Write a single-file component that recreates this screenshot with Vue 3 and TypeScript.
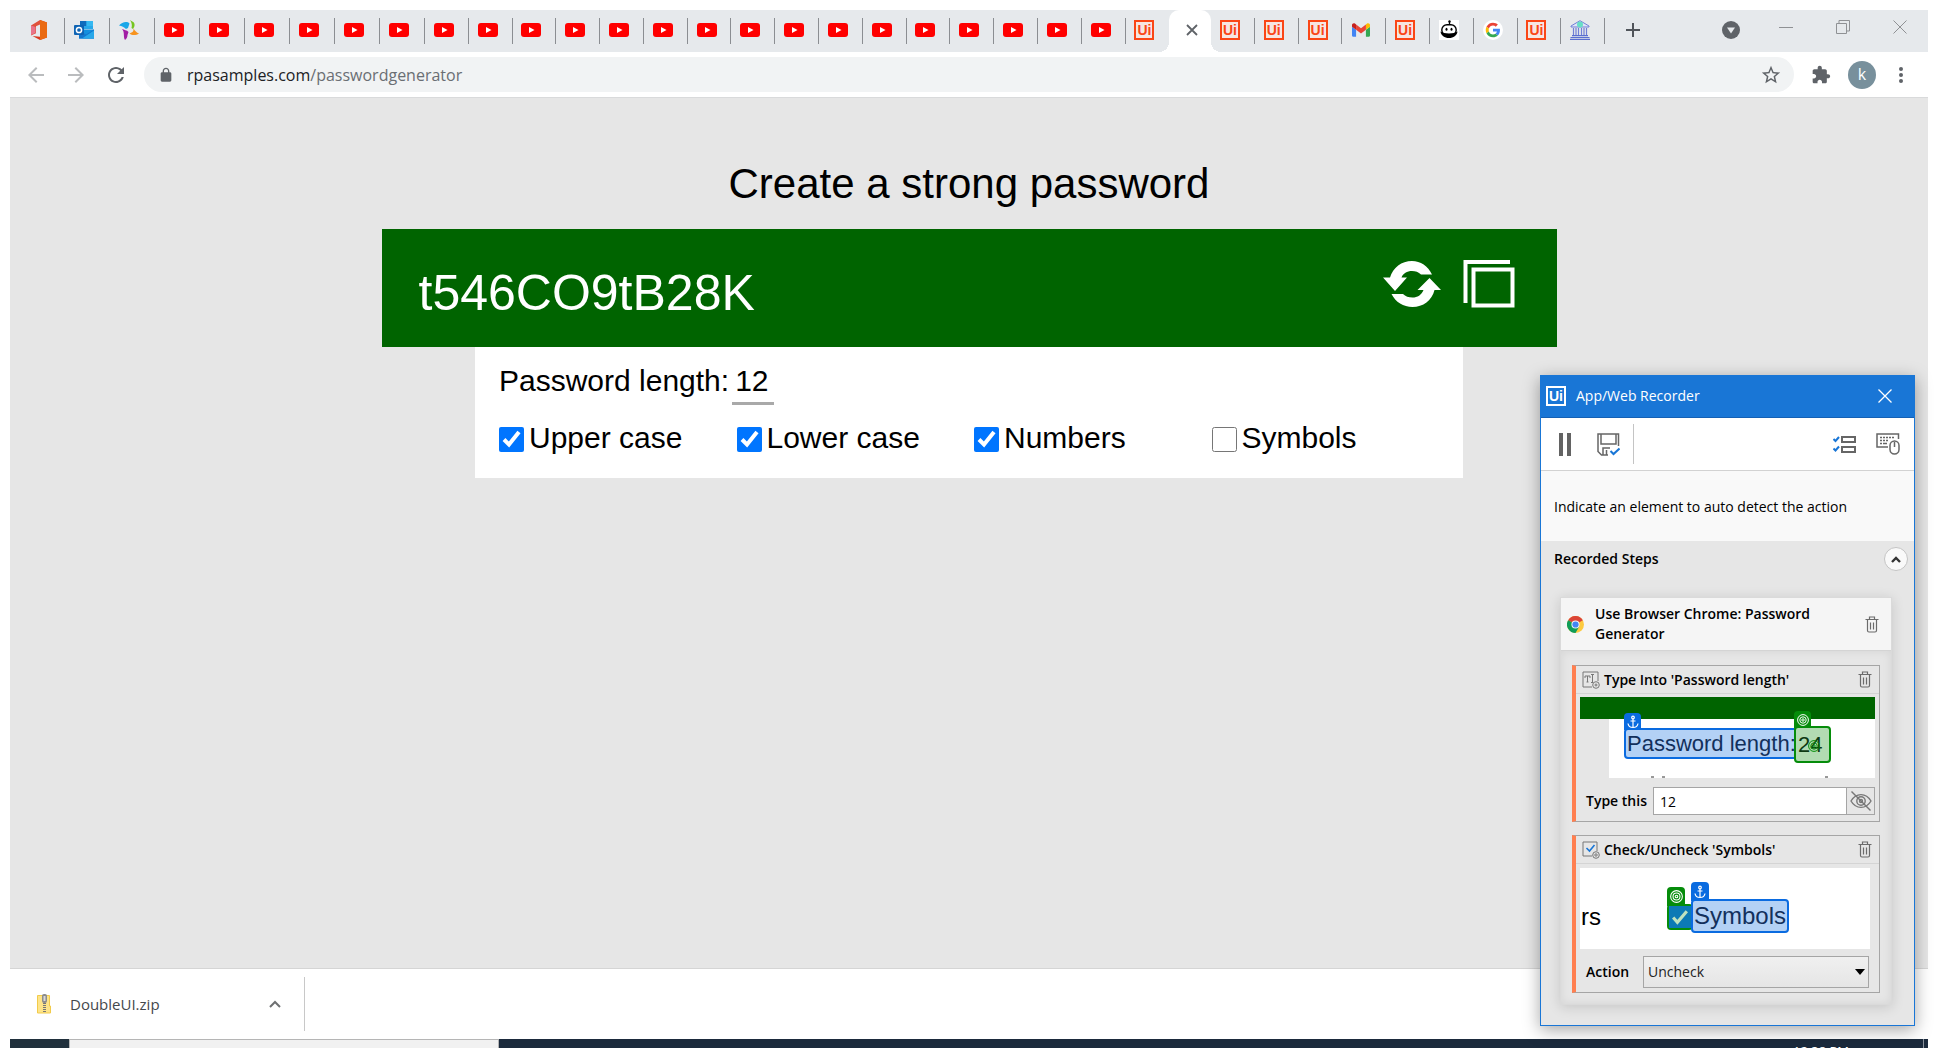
<script setup lang="ts">
import { ref } from 'vue'

type TabIcon = 'office' | 'outlook' | 'star' | 'youtube' | 'uipath' | 'gmail' | 'bot' | 'google' | 'bank'

interface Tab {
  icon: TabIcon
  title: string
  wide?: boolean
  active?: boolean
  last?: boolean
}

const tabs: Tab[] = [
  { icon: 'office', title: 'Office', wide: true },
  { icon: 'outlook', title: 'Outlook', wide: true },
  { icon: 'star', title: 'Workspace', wide: true },
  ...Array.from({ length: 22 }, (_, i): Tab => ({ icon: 'youtube', title: 'YouTube', wide: i < 6 })),
  { icon: 'uipath', title: 'UiPath', last: true },
  { icon: 'uipath', title: 'Password Generator', active: true },
  { icon: 'uipath', title: 'UiPath' },
  { icon: 'uipath', title: 'UiPath' },
  { icon: 'uipath', title: 'UiPath' },
  { icon: 'gmail', title: 'Gmail' },
  { icon: 'uipath', title: 'UiPath' },
  { icon: 'bot', title: 'Bot' },
  { icon: 'google', title: 'Google' },
  { icon: 'uipath', title: 'UiPath' },
  { icon: 'bank', title: 'Bank' },
]

const password = ref('t546CO9tB28K')
const passwordLength = ref('12')
const options = ref([
  { label: 'Upper case', checked: true },
  { label: 'Lower case', checked: true },
  { label: 'Numbers', checked: true },
  { label: 'Symbols', checked: false },
])

const typedText = ref('12')
const action = ref('Uncheck')
</script>

<template>
  <div class="screen">
    <svg class="sprite" aria-hidden="true">
      <symbol id="i-office" viewBox="0 0 20 20">
        <path d="M2 5.500L11 0v4.600L7 6.200v7L2 15.500z" fill="#e0523c" />
        <path d="M2 5.500v9.500l4.500-2.200V7z" fill="#e8748a" />
        <path d="M11 0l7 2.500v15L11 20 3.500 16 11 16.700z" fill="#d8371c" />
        <path d="M11 0l7 2.500v15L11 20z" fill="#ea6a12" />
      </symbol>
      <symbol id="i-outlook" viewBox="0 0 20 20">
        <path d="M6 1h13v8H6z" fill="#28a8ea" />
        <path d="M6 1h6.500v5H6z" fill="#0f6cbd" />
        <path d="M12.500 1H19v5h-6.500z" fill="#35b8f1" />
        <path d="M5 9.500h15V18.500H5z" fill="#1490df" />
        <path d="M20 9.500l-8 5-7-4V18.500h15z" fill="#1377cf" />
        <path d="M8 18.500l12-8v8z" fill="#28a8ea" />
        <rect y="5" width="10" height="10" rx="1" fill="#0f64b4" />
        <circle cx="5" cy="10" r="2.600" fill="none" stroke="#fff" stroke-width="1.500" />
      </symbol>
      <symbol id="i-star" viewBox="0 0 20 20">
        <path d="M0 5.500C3 2 8 1 10.500 3.500L9 8 7 9C5 7 3 6 0 5.500z" fill="#1aa7e8" />
        <path d="M11 0c2 1.500 4 1.500 4.500 4 .3 2-.5 3.500-1.500 5l-1.500-1c.8-3 .3-5-1.500-8z" fill="#76c51f" />
        <path d="M20 13.500c-3 2-7 2-9.500 0l3-1.500c1-1 1-2 1-3.500 1.500 2.500 3 4 5.500 5z" fill="#f7931e" />
        <path d="M3 9c2 1 5 1 6.500 3l-1 3c0 2-1 4-2.500 5-2-3 0-8-3-11z" fill="#a21fa5" />
      </symbol>
      <symbol id="i-youtube" viewBox="0 0 20 14">
        <rect width="20" height="14" rx="3" fill="#f00" />
        <path d="M8 4l5.500 3L8 10z" fill="#fff" />
      </symbol>
      <symbol id="i-gmail" viewBox="52 42 88 66">
        <path fill="#4285f4" d="M58 108h14V74L52 59v43c0 3.320 2.690 6 6 6" />
        <path fill="#34a853" d="M120 108h14c3.320 0 6-2.690 6-6V59l-20 15" />
        <path fill="#fbbc04" d="M120 48v26l20-15v-8c0-7.420-8.470-11.650-14.400-7.200" />
        <path fill="#ea4335" d="M72 74V48l24 18 24-18v26L96 92" />
        <path fill="#c5221f" d="M52 51v8l20 15V48l-5.600-4.200c-5.940-4.450-14.400-.22-14.400 7.200" />
      </symbol>
      <symbol id="i-bot" viewBox="0 0 20 20">
        <rect width="20" height="20" fill="#fff" />
        <path d="M10.500 2v3" stroke="#000" stroke-width="1.300" />
        <circle cx="10.500" cy="1.500" r="1.200" />
        <rect x="2.800" y="4.800" width="14.400" height="10.400" rx="5.200" fill="#fff" stroke="#000" stroke-width="1.400" />
        <ellipse cx="7.500" cy="9.300" rx="1" ry="1.500" />
        <ellipse cx="12.500" cy="9.300" rx="1" ry="1.500" />
        <path d="M1.500 11.500c3 2.500 14 2.500 17 0-.5 4-4 6.500-8.500 6.500s-8-2.500-8.500-6.500z" />
      </symbol>
      <symbol id="i-google" viewBox="-9 -9 66 66">
        <circle cx="24" cy="24" r="33" fill="#fff" />
        <path fill="#ea4335" d="M24 9.500c3.540 0 6.710 1.220 9.210 3.600l6.850-6.850C35.900 2.380 30.470 0 24 0 14.620 0 6.510 5.380 2.560 13.220l7.980 6.190C12.430 13.720 17.740 9.500 24 9.500z" />
        <path fill="#4285f4" d="M46.980 24.550c0-1.570-.15-3.090-.38-4.550H24v9.020h12.940c-.58 2.960-2.260 5.480-4.780 7.180l7.730 6c4.510-4.180 7.090-10.360 7.090-17.650z" />
        <path fill="#fbbc05" d="M10.530 28.590c-.48-1.450-.76-2.990-.76-4.590s.27-3.140.76-4.590l-7.980-6.190C.92 16.460 0 20.120 0 24s.92 7.540 2.560 10.780l7.970-6.190z" />
        <path fill="#34a853" d="M24 48c6.480 0 11.930-2.130 15.890-5.810l-7.730-6c-2.150 1.450-4.920 2.300-8.160 2.300-6.260 0-11.570-4.220-13.470-9.910l-7.980 6.190C6.510 42.620 14.620 48 24 48z" />
      </symbol>
      <symbol id="i-bank" viewBox="0 0 20 20">
        <path d="M1 6l9-5.300L19 6v1H1z" fill="#dfe4f8" stroke="#6f7fd6" />
        <circle cx="10" cy="4.500" r="3" fill="#67dfc6" />
        <path d="M3.500 8v7M6 8v7M8.500 8v7M11.500 8v7M14 8v7M16.500 8v7" stroke="#6f7fd6" stroke-width="1.200" />
        <path d="M2 15.700h16M.500 17.500h19M0 19.300h20" stroke="#5a6fd0" stroke-width="1.200" />
      </symbol>
      <symbol id="i-trash" viewBox="0 0 14 17">
        <path d="M0.500 3.500h13M4.500 3V1h5v2M2.500 4v10.500q0 1.500 1.500 1.500h6q1.500 0 1.500-1.500V4M5.500 6.500v7M8.500 6.500v7" fill="none" stroke="#6b6b6b" stroke-width="1.200" />
      </symbol>
      <symbol id="i-anchor" viewBox="0 0 12 14">
        <g fill="none" stroke="#fff" stroke-width="1.200">
          <circle cx="6" cy="2.500" r="1.300" />
          <path d="M6 4v8.500M3.500 6h5M1 8.500c.5 3 2.500 4 5 4s4.500-1 5-4" />
        </g>
      </symbol>
      <symbol id="i-target" viewBox="0 0 12 12">
        <g fill="none" stroke="currentColor">
          <circle cx="6" cy="6" r="5.400" />
          <circle cx="6" cy="6" r="3.200" />
          <circle cx="6" cy="6" r="1.200" />
        </g>
      </symbol>
    </svg>

    <div class="browser">
      <header class="tab-strip">
        <div class="tabs" role="tablist">
          <button
            v-for="(tab, i) in tabs"
            :key="i"
            type="button"
            role="tab"
            class="tab"
            :class="{ wide: tab.wide, active: tab.active, last: tab.last }"
            :aria-label="tab.title"
            :aria-selected="!!tab.active"
          >
            <svg v-if="tab.active" class="tab-close" viewBox="0 0 12 12">
              <path d="M1 1l10 10M11 1L1 11" stroke="#5f6368" stroke-width="1.800" />
            </svg>
            <span v-else-if="tab.icon === 'uipath'" class="ui-logo">Ui</span>
            <svg v-else class="favicon" :class="tab.icon"><use :href="'#i-' + tab.icon" /></svg>
          </button>
        </div>
        <div class="window-controls">
          <button type="button" class="ctl new-tab" aria-label="New tab">
            <svg width="16" height="16" viewBox="0 0 16 16"><path d="M8 1v14M1 8h14" stroke="#50545a" stroke-width="2" /></svg>
          </button>
          <div class="ctl-right">
            <button type="button" class="ctl search-tabs" aria-label="Search tabs">
              <svg width="18" height="18" viewBox="0 0 18 18"><circle cx="9" cy="9" r="9" fill="#5f6368" /><path d="M5 6.500h8L9 12.500z" fill="#e6e9ec" /></svg>
            </button>
            <button type="button" class="ctl" aria-label="Minimize">
              <svg width="14" height="14" viewBox="0 0 14 14"><path d="M0 7.500h14" stroke="#8f9194" /></svg>
            </button>
            <button type="button" class="ctl" aria-label="Restore">
              <svg width="14" height="14" viewBox="0 0 14 14"><path d="M.5 3.500h10v10H.5zM3 3.500v-3h10.500V11H11" fill="none" stroke="#8f9194" /></svg>
            </button>
            <button type="button" class="ctl" aria-label="Close">
              <svg width="14" height="14" viewBox="0 0 14 14"><path d="M.5.5l13 13M13.500.5l-13 13" stroke="#8f9194" /></svg>
            </button>
          </div>
        </div>
      </header>

      <div class="toolbar">
        <nav class="nav">
          <button type="button" class="ctl" aria-label="Back">
            <svg width="24" height="24" viewBox="0 0 24 24" fill="#babcbe"><path d="M20 11H7.830l5.590-5.590L12 4l-8 8 8 8 1.410-1.410L7.830 13H20v-2z" /></svg>
          </button>
          <button type="button" class="ctl" aria-label="Forward">
            <svg width="24" height="24" viewBox="0 0 24 24" fill="#babcbe"><path d="M4 11h12.170l-5.590-5.590L12 4l8 8-8 8-1.410-1.410L16.170 13H4v-2z" /></svg>
          </button>
          <button type="button" class="ctl" aria-label="Reload">
            <svg width="24" height="24" viewBox="0 0 24 24" fill="#5f6368"><path d="M17.650 6.350C16.200 4.900 14.210 4 12 4c-4.420 0-7.990 3.580-7.990 8s3.570 8 7.990 8c3.730 0 6.840-2.550 7.730-6h-2.080c-.82 2.330-3.040 4-5.650 4-3.310 0-6-2.690-6-6s2.690-6 6-6c1.660 0 3.140.69 4.220 1.780L13 11h7V4l-2.350 2.350z" /></svg>
          </button>
        </nav>
        <div class="omnibox">
          <svg width="16" height="16" viewBox="0 0 24 24" fill="#5f6368"><path d="M18 8h-1V6c0-2.760-2.240-5-5-5S7 3.240 7 6v2H6c-1.100 0-2 .9-2 2v10c0 1.100.9 2 2 2h12c1.100 0 2-.9 2-2V10c0-1.100-.9-2-2-2zM9 6c0-1.660 1.340-3 3-3s3 1.340 3 3v2H9V6z" /></svg>
          <a class="url" href="#">rpasamples.com<span>/passwordgenerator</span></a>
          <button type="button" class="ctl" aria-label="Bookmark this page">
            <svg width="22" height="22" viewBox="0 0 24 24" fill="#5f6368"><path d="M22 9.240l-7.190-.62L12 2 9.190 8.630 2 9.240l5.460 4.730L5.820 21 12 17.270 18.180 21l-1.630-7.030L22 9.240zM12 15.400l-3.760 2.270 1-4.280-3.320-2.880 4.380-.38L12 6.100l1.710 4.040 4.380.38-3.320 2.880 1 4.280L12 15.400z" /></svg>
          </button>
        </div>
        <div class="actions">
          <button type="button" class="ctl" aria-label="Extensions">
            <svg width="20" height="20" viewBox="0 0 24 24" fill="#5f6368"><path d="M20.500 11H19V7c0-1.100-.9-2-2-2h-4V3.500C13 2.120 11.880 1 10.500 1S8 2.120 8 3.500V5H4c-1.100 0-1.990.9-1.990 2v3.800H3.500c1.490 0 2.700 1.210 2.700 2.700s-1.210 2.700-2.700 2.700H2V20c0 1.100.9 2 2 2h3.800v-1.500c0-1.490 1.210-2.700 2.700-2.700 1.490 0 2.700 1.210 2.700 2.700V22H17c1.100 0 2-.9 2-2v-4h1.500c1.380 0 2.500-1.120 2.500-2.500S21.880 11 20.500 11z" /></svg>
          </button>
          <button type="button" class="avatar">k</button>
          <button type="button" class="ctl menu" aria-label="Menu">
            <svg width="6" height="18" viewBox="0 0 6 18" fill="#5f6368"><circle cx="3" cy="3" r="2" /><circle cx="3" cy="9" r="2" /><circle cx="3" cy="15" r="2" /></svg>
          </button>
        </div>
      </div>

      <main class="page">
        <h1>Create a strong password</h1>
        <section class="result">
          <output class="password">{{ password }}</output>
          <div class="result-actions">
            <button type="button" class="ctl" aria-label="Generate again">
              <svg width="58" height="48" viewBox="0 0 58 48" fill="#fff">
                <path d="M0 17.500h7C10 7.500 18.500 1 29 1c8.500 0 16 5 20 13.500H38c-2.500-2.500-5.500-3.500-9-3.500-5 0-9 2.500-10.500 6.500H24L12 31z" />
                <path d="M58 30h-6.500C49 40.500 40 47 29.500 47 20.500 47 12.500 42 8.500 34H20c2.500 2.500 5.500 3.500 9.500 3.500 5 0 9-2.500 11-7.500h-6l12-12z" />
              </svg>
            </button>
            <button type="button" class="ctl" aria-label="Copy password">
              <svg width="52" height="50" viewBox="0 0 52 50" fill="none" stroke="#fff" stroke-width="4">
                <path d="M2.500 44V3H47" />
                <path d="M10.500 10.500h39v36h-39z" />
              </svg>
            </button>
          </div>
        </section>
        <section class="options">
          <div class="length-row">
            <label for="length">Password length:</label>
            <input id="length" v-model="passwordLength" type="text" inputmode="numeric" />
          </div>
          <div class="checks">
            <label v-for="option in options" :key="option.label">
              <input v-model="option.checked" type="checkbox" />{{ option.label }}
            </label>
          </div>
        </section>
      </main>

      <footer class="downloads">
        <div class="download">
          <svg width="14" height="20" viewBox="0 0 14 20">
            <path d="M.5 1.500h12v10.500h1v7H.5z" fill="#fde48a" stroke="#f2cb4a" />
            <rect x="5" y="0" width="5" height="9" rx="2" fill="#8c8c8c" />
            <rect x="6.500" y="2" width="2" height="5" fill="#d9d9d9" />
            <path d="M7.500 9v10" stroke="#777" stroke-width="3" stroke-dasharray="1 1" />
          </svg>
          <a class="file" href="#">DoubleUI.zip</a>
          <button type="button" class="ctl" aria-label="More download options">
            <svg width="12" height="8" viewBox="0 0 12 8"><path d="M1 7l5-5 5 5" fill="none" stroke="#6e7072" stroke-width="2" /></svg>
          </button>
        </div>
      </footer>
    </div>

    <div class="taskbar">
      <div class="start"></div>
      <div class="search"></div>
      <time class="clock">12:38 PM</time>
      <div class="show-desktop"></div>
    </div>

    <aside class="recorder">
      <header class="rec-title">
        <span class="ui-logo light">Ui</span>
        <h2>App/Web Recorder</h2>
        <button type="button" class="ctl" aria-label="Close recorder">
          <svg width="14" height="14" viewBox="0 0 14 14"><path d="M.5.5l13 13M13.500.5l-13 13" stroke="#fff" stroke-width="1.300" /></svg>
        </button>
      </header>
      <div class="rec-tools">
        <button type="button" class="ctl" aria-label="Pause">
          <svg width="12" height="23" viewBox="0 0 12 23"><path d="M2 0v23M10 0v23" stroke="#636363" stroke-width="4" /></svg>
        </button>
        <button type="button" class="ctl save" aria-label="Save">
          <svg width="23" height="23" viewBox="0 0 23 23" fill="none" stroke="#666" stroke-width="1.500">
            <path d="M21.500 13V1H1v17.500L4.500 22H11M4 1v10h15V1M6 22v-7h7M9.500 17v5" />
            <path d="M13.500 18l3 3 6-5.500" stroke="#1976d6" stroke-width="2" />
          </svg>
        </button>
        <button type="button" class="ctl list" aria-label="Steps">
          <svg width="23" height="18" viewBox="0 0 23 18" fill="none" stroke="#666" stroke-width="2">
            <path d="M9 2h13v5H9zM9 12h13v5H9z" />
            <path d="M0.500 4l2 2L6 2M0.500 13.500l2 2L6 11.500" stroke="#1976d6" />
          </svg>
        </button>
        <button type="button" class="ctl" aria-label="Input mode">
          <svg width="24" height="22" viewBox="0 0 24 22" fill="none" stroke="#666" stroke-width="1.500">
            <path d="M12 14H1V1h21.500v5" />
            <path d="M4 4.500h15M4 7.500h9" stroke-dasharray="2 1" />
            <path d="M4 10.500h8" stroke-dasharray="2 1 4 1" />
            <rect x="14" y="8" width="9" height="13" rx="4.500" fill="#fff" />
            <path d="M18.500 9v5" />
          </svg>
        </button>
      </div>
      <p class="hint">Indicate an element to auto detect the action</p>
      <section class="steps">
        <div class="steps-head">
          <h3>Recorded Steps</h3>
          <button type="button" class="collapse" aria-label="Collapse">
            <svg width="10" height="7" viewBox="0 0 10 7"><path d="M1 6l4-4 4 4" fill="none" stroke="#333" stroke-width="2.400" /></svg>
          </button>
        </div>
        <div class="card">
          <div class="card-head">
            <svg width="17" height="17" viewBox="0 0 18 18">
              <circle cx="9" cy="9" r="9" fill="#fdca3f" />
              <path d="M9 9L1.200 4.500A9 9 0 0 1 16.800 4.500z" fill="#db4437" />
              <path d="M9 9L1.200 4.500A9 9 0 0 0 9 18l4-7z" fill="#0f9d58" />
              <circle cx="9" cy="9" r="4.300" fill="#f5f5f5" />
              <circle cx="9" cy="9" r="3.300" fill="#4285f4" />
            </svg>
            <h4>Use Browser Chrome: Password Generator</h4>
            <button type="button" class="ctl" aria-label="Delete browser step"><svg class="trash"><use href="#i-trash" /></svg></button>
          </div>
          <div class="card-body">
            <article class="step">
              <div class="step-head">
                <svg width="18" height="18" viewBox="0 0 18 18" fill="none" stroke="#777">
                  <path d="M10 16H1V1h15v9" />
                  <path d="M3 7V5h5v2M5.500 5v6M4.500 11h2M9 3.500h3M10.500 3.500v8M9 11.500h2" />
                  <circle cx="14" cy="14" r="3.300" fill="#e6e6e6" />
                  <path d="M12.500 14h3M14 12.500v3" />
                </svg>
                <h4>Type Into 'Password length'</h4>
                <button type="button" class="ctl" aria-label="Delete type step"><svg class="trash"><use href="#i-trash" /></svg></button>
              </div>
              <div class="preview first">
                <div class="band"></div>
                <div class="sheet">
                  <span class="mark anchor">
                    <span class="badge"><svg width="12" height="14"><use href="#i-anchor" /></svg></span>Password length:
                  </span>
                  <span class="mark target">
                    <span class="badge"><svg width="12" height="12"><use href="#i-target" /></svg></span>24
                    <svg class="pointer" width="12" height="12"><use href="#i-target" /></svg>
                  </span>
                </div>
                <svg class="cut" width="180" height="2" viewBox="0 0 180 2"><path d="M1 1h3M12 1h3M175 1h3" stroke="#333" /></svg>
              </div>
              <div class="field">
                <label for="typed">Type this</label>
                <input id="typed" v-model="typedText" type="text" />
                <button type="button" class="eye" aria-label="Hide text">
                  <svg width="22" height="20" viewBox="0 0 22 20" fill="none" stroke="#777" stroke-width="1.400">
                    <path d="M1 10c5-8.500 15-8.500 20 0-5 8.500-15 8.500-20 0z" />
                    <circle cx="11" cy="10" r="4.200" />
                    <circle cx="11" cy="10" r="1.500" />
                    <path d="M1.500.5l19 19" />
                  </svg>
                </button>
              </div>
            </article>
            <article class="step">
              <div class="step-head">
                <svg width="18" height="18" viewBox="0 0 18 18" fill="none" stroke="#777">
                  <path d="M10 15H1V1h14v9" />
                  <path d="M4.500 7l3 3 5-6" stroke="#1976d6" stroke-width="1.600" />
                  <circle cx="14" cy="14" r="3.300" fill="#e6e6e6" />
                  <circle cx="14" cy="14" r="1.200" />
                </svg>
                <h4>Check/Uncheck 'Symbols'</h4>
                <button type="button" class="ctl" aria-label="Delete check step"><svg class="trash"><use href="#i-trash" /></svg></button>
              </div>
              <div class="preview second">
                <span class="cropped">rs</span>
                <span class="mark target box">
                  <span class="badge"><svg width="13" height="13"><use href="#i-target" /></svg></span>
                  <svg width="22" height="22" viewBox="0 0 21 21"><rect width="21" height="21" fill="#0c7ab5" /><path d="M4 11l4 4.500L17 5" fill="none" stroke="#bfe3bf" stroke-width="3" /></svg>
                </span>
                <span class="mark anchor">
                  <span class="badge"><svg width="12" height="14"><use href="#i-anchor" /></svg></span>Symbols
                </span>
              </div>
              <div class="field action">
                <label for="action">Action</label>
                <div class="select">
                  <select id="action" v-model="action">
                    <option>Check</option>
                    <option>Uncheck</option>
                  </select>
                  <svg width="10" height="6" viewBox="0 0 10 6"><path d="M0 0h10L5 6z" /></svg>
                </div>
              </div>
            </article>
          </div>
        </div>
      </section>
    </aside>
  </div>
</template>

<style>
body {
  margin: 0;
  background: #fff;
}
</style>

<style scoped>
* {
  box-sizing: border-box;
}
.screen {
  position: relative;
  display: flex;
  flex-direction: column;
  height: 100vh;
  padding: 10px 10px 0;
  overflow: hidden;
  background: #fff;
  font-family: "Open Sans", "Noto Sans", sans-serif;
}
.sprite {
  position: absolute;
  width: 0;
  height: 0;
}
svg {
  display: block;
  flex: none;
}
button {
  font-family: inherit;
}
h1, h2, h3, h4, p {
  margin: 0;
}
.ctl {
  display: flex;
  padding: 0;
  border: 0;
  background: none;
}
.browser {
  display: flex;
  flex: 1;
  flex-direction: column;
  min-height: 0;
}

.tab-strip {
  display: flex;
  flex: none;
  height: 42px;
  padding-left: 10px;
  background: #e6e9ec;
}
.tabs {
  display: flex;
  flex: 1;
  min-width: 0;
}
.tab {
  position: relative;
  display: flex;
  flex: 1 1 0;
  align-items: center;
  justify-content: center;
  min-width: 0;
  padding: 0 6px 2px 0;
  border: 0;
  background: none;
}
.tab.wide {
  flex: 0 0 45px;
  padding-right: 8px;
}
.tab::after {
  position: absolute;
  top: 8px;
  right: 0;
  width: 1px;
  height: 26px;
  background: #8b8e92;
  content: "";
}
.tab.active::after,
.tab.last::after {
  display: none;
}
.tab.active {
  padding: 0 0 2px 4px;
  border-radius: 10px 10px 0 0;
  background: #fff;
}
.tab.active::before {
  position: absolute;
  right: -10px;
  bottom: 0;
  left: -10px;
  height: 10px;
  background:
    radial-gradient(circle at 0 0, transparent 10px, #fff 10px) left / 10px 10px no-repeat,
    radial-gradient(circle at 100% 0, transparent 10px, #fff 10px) right / 10px 10px no-repeat;
  content: "";
}
.tab-close {
  width: 12px;
  height: 12px;
}
.favicon {
  width: 20px;
  height: 20px;
}
.favicon.youtube {
  height: 14px;
}
.favicon.gmail {
  width: 18px;
  height: 14px;
}
.ui-logo {
  flex: none;
  width: 20px;
  height: 20px;
  border: 2px solid #fa4616;
  color: #fa4616;
  background: #f6e6e2;
  font: bold 14px/16px "Liberation Sans", Arial, sans-serif;
  text-align: center;
}
.ui-logo.light {
  border-color: #fff;
  color: #fff;
  background: none;
}
.window-controls {
  display: flex;
  flex: none;
  justify-content: space-between;
  width: 323px;
  padding: 0 21px 0 20px;
}
.new-tab {
  align-items: center;
  padding-bottom: 2px;
}
.ctl-right {
  display: flex;
  align-items: center;
  gap: 43px;
  padding-bottom: 8px;
}
.search-tabs {
  margin-right: -4px;
  padding-top: 6px;
}

.toolbar {
  display: flex;
  flex: none;
  align-items: center;
  height: 46px;
  padding: 0 24px 0 14px;
  border-bottom: 1px solid #d9dadb;
}
.nav {
  display: flex;
  gap: 16px;
  width: 120px;
}
.omnibox {
  display: flex;
  flex: 1;
  align-items: center;
  height: 35px;
  padding: 0 12px 0 14px;
  border-radius: 18px;
  background: #f1f3f4;
}
.url {
  flex: 1;
  margin-left: 13px;
  color: #202124;
  font-size: 16px;
  text-decoration: none;
}
.url span {
  color: #6a6e73;
}
.actions {
  display: flex;
  align-items: center;
  width: 110px;
  padding-left: 17px;
}
.avatar {
  width: 28px;
  height: 28px;
  margin-left: 17px;
  padding: 0 0 2px;
  border: 0;
  border-radius: 50%;
  color: #fff;
  background: #78909c;
  font-size: 16px;
  line-height: 26px;
}
.menu {
  margin-left: auto;
}

.page {
  display: flex;
  flex: 1;
  flex-direction: column;
  align-items: center;
  padding-top: 61px;
  color: #000;
  background: #e6e6e6;
  font-family: "Liberation Sans", Arial, sans-serif;
}
h1 {
  margin-bottom: 20px;
  font-size: 42px;
  font-weight: 400;
  line-height: 50px;
}
.result {
  display: flex;
  align-items: flex-start;
  justify-content: space-between;
  width: 90%;
  max-width: 1175px;
  padding: 30px 42px 25px 37px;
  color: #fff;
  background: #006400;
}
.password {
  padding-top: 5px;
  font-size: 50px;
  line-height: 58px;
}
.result-actions {
  display: flex;
  align-items: center;
  gap: 22px;
}
.options {
  width: 80%;
  max-width: 988px;
  padding: 16px 14px 22px 24px;
  background: #fff;
  font-size: 30px;
  line-height: 36px;
}
.length-row {
  display: flex;
  align-items: baseline;
  gap: 3px;
}
.length-row input {
  width: 42px;
  height: 41px;
  padding: 0 3px 4px;
  border: 0;
  border-bottom: 3px solid #a9a9a9;
  background: none;
  font: inherit;
  line-height: 34px;
}
.checks {
  display: grid;
  grid-template-columns: repeat(4, 1fr);
  margin-top: 15px;
}
.checks label {
  display: flex;
  align-items: center;
}
.checks input {
  width: 25px;
  height: 25px;
  margin: 2px 5px 0 0;
}

.downloads {
  display: flex;
  flex: none;
  align-items: center;
  height: 71px;
  border-top: 1px solid #d5d5d5;
}
.download {
  display: flex;
  align-items: center;
  width: 295px;
  height: 54px;
  padding: 0 23px 0 27px;
  border-right: 1px solid #c8c8c8;
}
.file {
  flex: 1;
  margin-left: 19px;
  color: #45484c;
  font-size: 15px;
  text-decoration: none;
}
.taskbar {
  display: flex;
  flex: none;
  height: 9px;
  overflow: hidden;
  background: #1b2a3c;
}
.start {
  width: 59px;
  background: #20303c;
}
.search {
  width: 430px;
  border: 1px solid #b5b5b5;
  border-bottom: 0;
  background: #f1f1f1;
}
.clock {
  margin-left: auto;
  padding: 4px 74px 0 0;
  color: #fff;
  font-size: 13px;
  line-height: 16px;
}
.show-desktop {
  width: 5px;
  border-left: 1px solid #8a929c;
}

.recorder {
  position: absolute;
  top: 375px;
  right: 23px;
  width: 375px;
  border: 1px solid #1976d6;
  color: #000;
  background: #e6e6e6;
  box-shadow: 0 4px 16px rgba(0, 0, 0, 0.35);
  font-size: 14px;
  line-height: 20px;
}
.recorder h2,
.recorder h3,
.recorder h4 {
  flex: 1;
  font-size: 14px;
  font-weight: 600;
}
.rec-title {
  display: flex;
  align-items: center;
  height: 42px;
  padding: 0 22px 2px 5px;
  border-bottom: 1px solid #1460b4;
  color: #fff;
  background: #1976d6;
}
.recorder .rec-title h2 {
  margin-left: 10px;
  font-weight: 400;
}
.rec-tools {
  display: flex;
  align-items: center;
  height: 53px;
  padding: 0 14px 0 18px;
  border-bottom: 1px solid #d2d2d2;
  background: #fff;
}
.rec-tools .save {
  align-items: center;
  height: 40px;
  margin-left: 15px;
  padding: 0 13px 0 11px;
  border-right: 1px solid #c4c4c4;
}
.rec-tools .list {
  margin-right: 20px;
  margin-left: auto;
}
.hint {
  padding: 26px 13px 24px;
  background: #f9f9f9;
}
.steps {
  padding: 6px 22px 20px 19px;
}
.steps-head {
  display: flex;
  align-items: center;
  justify-content: space-between;
  margin: 0 -16px 26px -6px;
}
.collapse {
  display: flex;
  align-items: center;
  justify-content: center;
  width: 24px;
  height: 24px;
  padding: 0;
  border: 1px solid #c4c4c4;
  border-radius: 50%;
  background: #f9f9f9;
}
.card {
  border: 1px solid #dadada;
  box-shadow: 0 2px 12px rgba(0, 0, 0, 0.14);
}
.card-head {
  display: flex;
  align-items: center;
  gap: 11px;
  height: 53px;
  padding: 0 12px 0 6px;
  border-bottom: 1px solid #d4d4d4;
  background: #f5f5f5;
}
.trash {
  width: 14px;
  height: 17px;
}
.card-body {
  display: flex;
  flex-direction: column;
  gap: 13px;
  padding: 14px 11px 11px 11px;
  background: #e6e6e6;
  box-shadow: inset 0 0 10px rgba(0, 0, 0, 0.08);
}
.step {
  border: 1px solid #a5a5a5;
  border-left: 4px solid #ff7f50;
}
.step-head {
  display: flex;
  align-items: center;
  gap: 4px;
  height: 28px;
  padding: 0 7px 0 6px;
  border-bottom: 1px solid #d4d4d4;
}
.preview {
  position: relative;
  display: flex;
  margin: 3px 4px 8px;
  font-family: "Liberation Sans", Arial, sans-serif;
}
.preview.first {
  flex-direction: column;
  height: 81px;
  margin-bottom: 9px;
}
.band {
  height: 22px;
  background: #006400;
}
.sheet {
  display: flex;
  flex: 1;
  align-items: flex-start;
  margin-left: 29px;
  padding: 7px 0 0 15px;
  background: #fff;
}
.mark {
  position: relative;
  border: 2px solid #0a6be0;
  border-radius: 4px;
  color: #12305c;
  background: #b3d1f5;
  white-space: nowrap;
}
.mark .badge {
  position: absolute;
  bottom: 100%;
  left: -2px;
  display: flex;
  align-items: center;
  justify-content: center;
  width: 17px;
  height: 17px;
  border-radius: 4px 4px 0 0;
  color: #fff;
  background: #0a6be0;
}
.mark.target {
  border-color: #058c0a;
  color: #0d3a12;
  background: #b2dbb2;
}
.mark.target .badge {
  background: #058c0a;
}
.first .mark {
  height: 31px;
  padding: 0 1px;
  font-size: 22px;
  line-height: 28px;
}
.first .mark.anchor {
  width: 174px;
  margin-top: 2px;
}
.first .mark.target {
  width: 37px;
  height: 37px;
  margin-left: -4px;
  padding: 0 2px;
  line-height: 33px;
}
.pointer {
  position: absolute;
  top: 12px;
  left: 12px;
  color: #058c0a;
}
.cut {
  position: absolute;
  bottom: 0;
  left: 70px;
}
.preview.second {
  align-items: flex-start;
  height: 81px;
  margin: 4px 9px 7px 4px;
  padding-top: 31px;
  background: #fff;
  font-size: 24px;
  line-height: 30px;
}
.second .badge {
  width: 18px;
  height: 19px;
}
.cropped {
  width: 87px;
  padding: 3px 0 0 1px;
}
.second .mark.target {
  width: 26px;
  height: 26px;
  margin-top: 5px;
}
.second .mark.anchor {
  height: 34px;
  margin-left: -2px;
  padding: 0 1px;
}
.field {
  display: flex;
  align-items: center;
  height: 28px;
  margin: 0 4px 6px 10px;
}
.field label {
  flex: none;
  width: 67px;
  font-weight: 600;
}
.field input {
  flex: 1;
  min-width: 0;
  height: 28px;
  padding: 0 6px;
  border: 1px solid #a5a5a5;
  background: #fff;
  font: inherit;
}
.eye {
  display: flex;
  align-items: center;
  justify-content: center;
  width: 28px;
  height: 28px;
  padding: 0;
  border: 1px solid #a5a5a5;
  border-left: 0;
  background: #e6e6e6;
}
.field.action {
  height: 32px;
  margin: 0 10px 4px 10px;
}
.field.action label {
  width: 57px;
}
.select {
  position: relative;
  flex: 1;
}
.select select {
  width: 100%;
  height: 32px;
  padding: 0 4px;
  border: 1px solid #a5a5a5;
  border-radius: 0;
  color: #222;
  background: linear-gradient(#f0f0f0, #e5e5e5);
  font: inherit;
  appearance: none;
}
.select svg {
  position: absolute;
  top: 13px;
  right: 4px;
  pointer-events: none;
}
</style>
